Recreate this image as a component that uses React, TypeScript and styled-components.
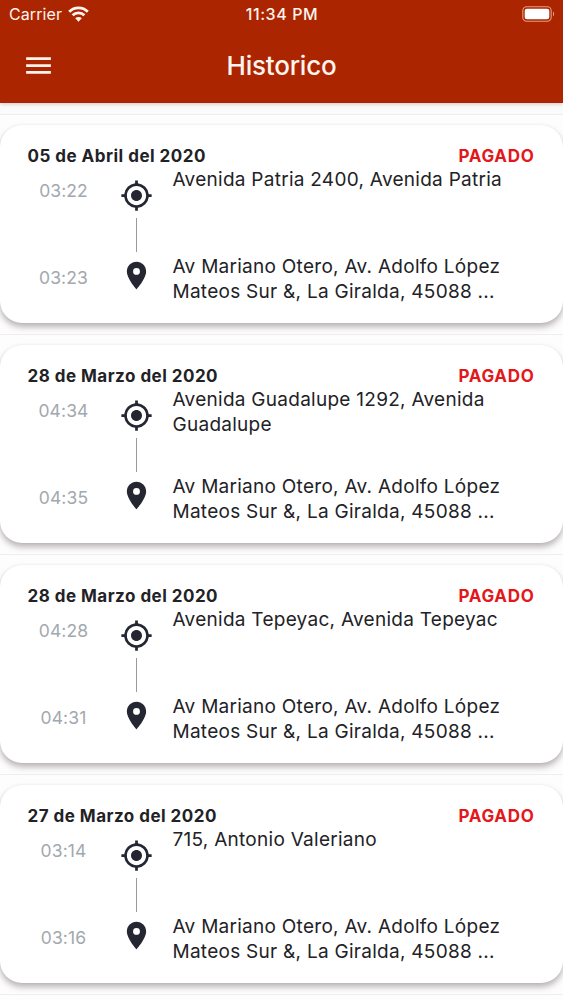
import React from "react";
import styled, { createGlobalStyle } from "styled-components";

const GlobalStyle = createGlobalStyle`
  * { box-sizing: border-box; }
  html, body { margin: 0; background: #fefdfd; }
  body { font-family: Inter, "Liberation Sans", sans-serif; color: #222226; overflow: hidden; }
  svg { display: block; }
`;

const Screen = styled.div`
  width: 100%;
  height: 1000px;
  overflow: hidden;
  display: flex;
  flex-direction: column;
`;

const Header = styled.header`
  flex: none;
  height: 103px;
  background: #ab2600;
  color: #fff4ee;
  box-shadow: 0 1px 4px rgba(120, 50, 50, 0.28);
  z-index: 1;
`;

const StatusBar = styled.div`
  display: grid;
  grid-template-columns: 1fr auto 1fr;
  align-items: center;
  height: 28px;
  padding: 0 8px 0 9px;
`;

const Carrier = styled.div`
  display: flex;
  align-items: center;
  gap: 6px;
  font-size: 16px;
  line-height: 20px;
  letter-spacing: 0.1px;
`;

const Clock = styled.div`
  font-size: 16px;
  line-height: 20px;
  font-weight: 500;
  letter-spacing: 0.6px;
`;

const BatterySlot = styled.div`
  display: flex;
  justify-content: flex-end;
`;

const TitleBar = styled.div`
  display: grid;
  grid-template-columns: 60px 1fr 60px;
  align-items: center;
  height: 75px;
`;

const MenuButton = styled.button`
  width: 33px;
  height: 33px;
  margin-left: 22px;
  padding: 0;
  border: 0;
  background: none;
  color: inherit;
`;

const Title = styled.h1`
  margin: 0;
  text-align: center;
  font-size: 26px;
  line-height: 32px;
  font-weight: 500;
  letter-spacing: -0.2px;
`;

const List = styled.main`
  flex: 1;
  min-height: 0;
  padding-top: 11px;
  background: #fcfbfb;
`;

const Item = styled.section`
  height: 220px;
  padding-top: 10px;
  border-top: 1px solid #efeeef;
  background: #fefdfd;
`;

const Card = styled.article`
  height: 198px;
  padding: 20px 28.5px 0 27.5px;
  border-radius: 22px;
  background: #fff;
  box-shadow: 0 4px 6px rgba(60, 50, 65, 0.36), 0 0 2px rgba(60, 50, 65, 0.08);
`;

const CardHeader = styled.div`
  display: flex;
  justify-content: space-between;
  height: 22px;
  font-size: 17px;
  line-height: 22px;
  font-weight: 700;
`;

const TripDate = styled.span`
  letter-spacing: 0.48px;
`;

const Status = styled.span`
  color: #e2181b;
  letter-spacing: 0.7px;
`;

const Route = styled.div`
  display: grid;
  grid-template-columns: 72px 74px 1fr;
`;

const Times = styled.div`
  display: flex;
  flex-direction: column;
  gap: 63px;
  padding-top: 12px;
  text-align: center;
  font-size: 17.5px;
  line-height: 24px;
  letter-spacing: 0.1px;
  color: #a3a8ae;
`;

const Track = styled.div`
  display: flex;
  flex-direction: column;
  align-items: center;
  padding-top: 12px;
  color: #242632;
`;

const Connector = styled.div`
  width: 1px;
  height: 34px;
  margin: 6px 0 7px;
  background: #999a9e;
`;

const Addresses = styled.div`
  margin-left: -1px;
  padding-top: 1px;
  font-size: 19px;
  line-height: 24.5px;
  letter-spacing: 0.27px;
`;

const Address = styled.div`
  height: 87px;
  white-space: nowrap;
`;

const MenuIcon = () => (
  <svg width="33" height="33" viewBox="0 0 24 24" fill="currentColor">
    <path d="M3 18h18v-2H3v2zm0-5h18v-2H3v2zm0-7v2h18V6H3z" />
  </svg>
);

const WifiIcon = () => (
  <svg width="21" height="16" viewBox="0 0 21 16" fill="none" stroke="currentColor" strokeWidth="2.8">
    <path d="M1.2 5.8a13.2 13.2 0 0 1 18.6 0" />
    <path d="M4.6 9.3a8.4 8.4 0 0 1 11.8 0" />
    <path d="M10.5 15.8 7.2 12.3a4.7 4.7 0 0 1 6.6 0z" fill="currentColor" stroke="none" />
  </svg>
);

const BatteryIcon = () => (
  <svg width="33" height="16" viewBox="0 0 33 16" fill="none">
    <rect x="0.8" y="0.8" width="28.4" height="14.4" rx="4" stroke="#e59f83" strokeWidth="1.1" />
    <rect x="2.7" y="2.7" width="24.6" height="10.6" rx="2.3" fill="#fff" />
    <path d="M31 5.6c1.6.8 1.6 4 0 4.8z" fill="#e59f83" />
  </svg>
);

const OriginIcon = () => (
  <svg width="33" height="33" viewBox="0 0 24 24" fill="currentColor">
    <path d="M12 8c-2.21 0-4 1.79-4 4s1.79 4 4 4 4-1.79 4-4-1.79-4-4-4zm8.94 3A8.994 8.994 0 0 0 13 3.06V1h-2v2.06A8.994 8.994 0 0 0 3.06 11H1v2h2.06A8.994 8.994 0 0 0 11 20.94V23h2v-2.06A8.994 8.994 0 0 0 20.94 13H23v-2h-2.06zM12 19c-3.87 0-7-3.13-7-7s3.13-7 7-7 7 3.13 7 7-3.13 7-7 7z" />
  </svg>
);

const PinIcon = () => (
  <svg width="33" height="33" viewBox="0 0 24 24" fill="currentColor">
    <path d="M12 2C8.13 2 5 5.13 5 9c0 5.25 7 13 7 13s7-7.75 7-13c0-3.87-3.13-7-7-7zm0 9.5a2.5 2.5 0 0 1 0-5 2.5 2.5 0 0 1 0 5z" />
  </svg>
);

interface Trip {
  date: string;
  start: string;
  end: string;
  origin: string[];
}

const destination = ["Av Mariano Otero, Av. Adolfo López", "Mateos Sur &, La Giralda, 45088 ..."];

const trips: Trip[] = [
  { date: "05 de Abril del 2020", start: "03:22", end: "03:23", origin: ["Avenida Patria 2400, Avenida Patria"] },
  { date: "28 de Marzo del 2020", start: "04:34", end: "04:35", origin: ["Avenida Guadalupe 1292, Avenida", "Guadalupe"] },
  { date: "28 de Marzo del 2020", start: "04:28", end: "04:31", origin: ["Avenida Tepeyac, Avenida Tepeyac"] },
  { date: "27 de Marzo del 2020", start: "03:14", end: "03:16", origin: ["715, Antonio Valeriano"] },
];

const TripCard = ({ trip }: { trip: Trip }) => (
  <Item>
    <Card>
      <CardHeader>
        <TripDate>{trip.date}</TripDate>
        <Status>PAGADO</Status>
      </CardHeader>
      <Route>
        <Times>
          <span>{trip.start}</span>
          <span>{trip.end}</span>
        </Times>
        <Track>
          <OriginIcon />
          <Connector />
          <PinIcon />
        </Track>
        <Addresses>
          {[trip.origin, destination].map((lines, i) => (
            <Address key={i}>
              {lines.map((line) => (
                <div key={line}>{line}</div>
              ))}
            </Address>
          ))}
        </Addresses>
      </Route>
    </Card>
  </Item>
);

export default function App() {
  return (
    <Screen>
      <GlobalStyle />
      <Header>
        <StatusBar>
          <Carrier>
            Carrier
            <WifiIcon />
          </Carrier>
          <Clock>11:34 PM</Clock>
          <BatterySlot>
            <BatteryIcon />
          </BatterySlot>
        </StatusBar>
        <TitleBar>
          <MenuButton aria-label="Menu">
            <MenuIcon />
          </MenuButton>
          <Title>Historico</Title>
        </TitleBar>
      </Header>
      <List>
        {trips.map((trip, i) => (
          <TripCard key={i} trip={trip} />
        ))}
        <Item />
      </List>
    </Screen>
  );
}
